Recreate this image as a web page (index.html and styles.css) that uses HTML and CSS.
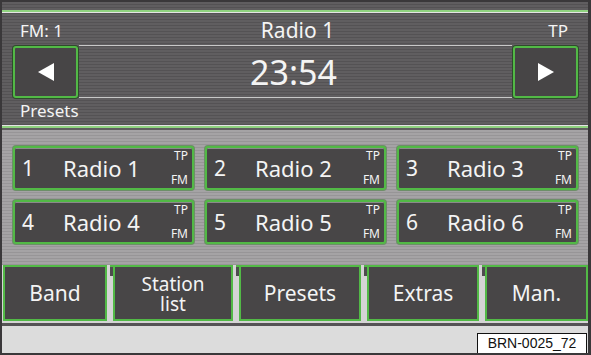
FILE: index.html
```html
<!DOCTYPE html>
<html lang="en">
<head>
  <meta charset="UTF-8">
  <title>Radio</title>
  <link rel="stylesheet" href="styles.css">
</head>
<body>
  <div class="screen">
    <div class="head">
      <div class="head-panel">
        <div class="head-top">
          <span>FM: 1</span>
          <span class="station">Radio 1</span>
          <span class="tp-flag">TP</span>
        </div>
        <div class="head-mid">
          <div class="arrow">
            <svg width="16" height="18" viewBox="0 0 16 18"><path d="M16 0 L0 9 L16 18 Z" fill="#fff"/></svg>
          </div>
          <div class="clock">23:54</div>
          <div class="arrow">
            <svg width="16" height="18" viewBox="0 0 16 18"><path d="M0 0 L16 9 L0 18 Z" fill="#fff"/></svg>
          </div>
        </div>
        <div class="head-bottom">Presets</div>
      </div>
    </div>

    <div class="presets">
      <div class="preset"><span class="num">1</span><span class="name">Radio 1</span><span class="tp">TP</span><span class="fm">FM</span></div>
      <div class="preset"><span class="num">2</span><span class="name">Radio 2</span><span class="tp">TP</span><span class="fm">FM</span></div>
      <div class="preset"><span class="num">3</span><span class="name">Radio 3</span><span class="tp">TP</span><span class="fm">FM</span></div>
      <div class="preset"><span class="num">4</span><span class="name">Radio 4</span><span class="tp">TP</span><span class="fm">FM</span></div>
      <div class="preset"><span class="num">5</span><span class="name">Radio 5</span><span class="tp">TP</span><span class="fm">FM</span></div>
      <div class="preset"><span class="num">6</span><span class="name">Radio 6</span><span class="tp">TP</span><span class="fm">FM</span></div>
    </div>

    <div class="menu">
      <div class="tab tab-band">Band</div>
      <div class="tab tab-list">Station<br>list</div>
      <div class="tab tab-presets">Presets</div>
      <div class="tab tab-extras">Extras</div>
      <div class="tab tab-man">Man.</div>
    </div>

    <div class="footer">
      <span class="ref">BRN-0025_72</span>
    </div>
  </div>
</body>
</html>
```

FILE: styles.css
```css
* {
  box-sizing: border-box;
}
body {
  margin: 0;
  background: #3a3a3a;
  font-family: "Noto Sans", "Open Sans", sans-serif;
  color: #f4f4f4;
}
.screen {
  width: 591px;
  height: 355px;
  padding: 2px 3px 2px 2px;
  background: #3a383a;
  display: flex;
  flex-direction: column;
  overflow: hidden;
}
.head {
  height: 128px;
  padding-top: 8px;
  background: repeating-linear-gradient(to bottom, #605e60 0 2px, #545254 2px 3px);
}
.head-panel {
  border-top: 2px solid #8fd27f;
  border-bottom: 2px solid #8fd27f;
  box-shadow: inset 0 1px 0 #e4e4e4, inset 0 -1px 0 #e4e4e4;
}
.head-top {
  height: 33px;
  padding: 3px 20px 0 18px;
  display: grid;
  grid-template-columns: 1fr auto 1fr;
  align-items: center;
  font-size: 17px;
}
.head-top .station {
  font-size: 21px;
  margin-left: 7px;
}
.head-top .tp-flag {
  text-align: right;
}
.head-mid {
  height: 53px;
  display: flex;
  align-items: center;
  padding: 0 10px 0 11px;
}
.arrow {
  width: 65px;
  height: 52px;
  border: 2px solid #52b946;
  border-radius: 3px;
  background: #474546;
  box-shadow: 0 0 0 1px #2f4a2c;
  display: flex;
  align-items: center;
  justify-content: center;
}
.clock {
  flex: 1;
  height: 53px;
  margin: 0 1px;
  border-top: 1px solid #c8c8c8;
  border-bottom: 1px solid #c8c8c8;
  display: flex;
  align-items: center;
  justify-content: center;
  font-size: 34px;
  padding-right: 4px;
}
.head-bottom {
  height: 28px;
  padding-left: 18px;
  font-size: 17px;
  line-height: 26px;
}
.presets {
  height: 135px;
  padding: 16px 0 0 11px;
  background: repeating-linear-gradient(to bottom, #a5a3a5 0 2px, #979597 2px 3px);
  display: grid;
  grid-template-columns: 181px 181px 181px;
  grid-template-rows: 44px 44px;
  column-gap: 11px;
  row-gap: 10px;
  align-content: start;
}
.preset {
  position: relative;
  border: 2px solid #52b946;
  border-radius: 3px;
  background: #484647;
  box-shadow: 0 0 0 1px #6d8f68, inset 0 1px 0 #8a8a8a;
  display: flex;
  align-items: center;
}
.preset .num {
  width: 40px;
  padding-left: 7px;
  font-size: 21px;
}
.preset .name {
  font-size: 22px;
  margin-left: 8px;
}
.preset .tp,
.preset .fm {
  position: absolute;
  right: 4px;
  font-size: 12px;
  line-height: 16px;
}
.preset .tp {
  top: 0;
}
.preset .fm {
  bottom: 0;
}
.menu {
  height: 58px;
  padding: 0 0 2px 1px;
  background: #d4d4d4;
  display: flex;
  gap: 6px;
}
.tab {
  position: relative;
  height: 56px;
  border: 2px solid #52b946;
  background: #484647;
  display: flex;
  align-items: center;
  justify-content: center;
  text-align: center;
  font-size: 21px;
  line-height: 22px;
}
.tab + .tab::before {
  content: "";
  position: absolute;
  left: -5px;
  top: -2px;
  width: 3px;
  height: 9px;
  background: #4e4c4e;
  border-top: 2px solid #52b946;
}
.tab-band { width: 104px; }
.tab-list { width: 120px; font-size: 19px; line-height: 20px; padding-top: 2px; }
.tab-presets { width: 122px; }
.tab-extras { width: 112px; }
.tab-man { width: 103px; }
.footer {
  flex: 1;
  border-top: 3px solid #555355;
  background: #dcdcdc;
  display: flex;
  justify-content: flex-end;
  align-items: flex-end;
  padding-right: 1px;
}
.ref {
  width: 110px;
  height: 20px;
  border: 1px solid #111;
  border-bottom: none;
  background: #fff;
  color: #111;
  font-family: "Liberation Sans", Arial, sans-serif;
  font-size: 14px;
  line-height: 19px;
  text-align: center;
}
```
